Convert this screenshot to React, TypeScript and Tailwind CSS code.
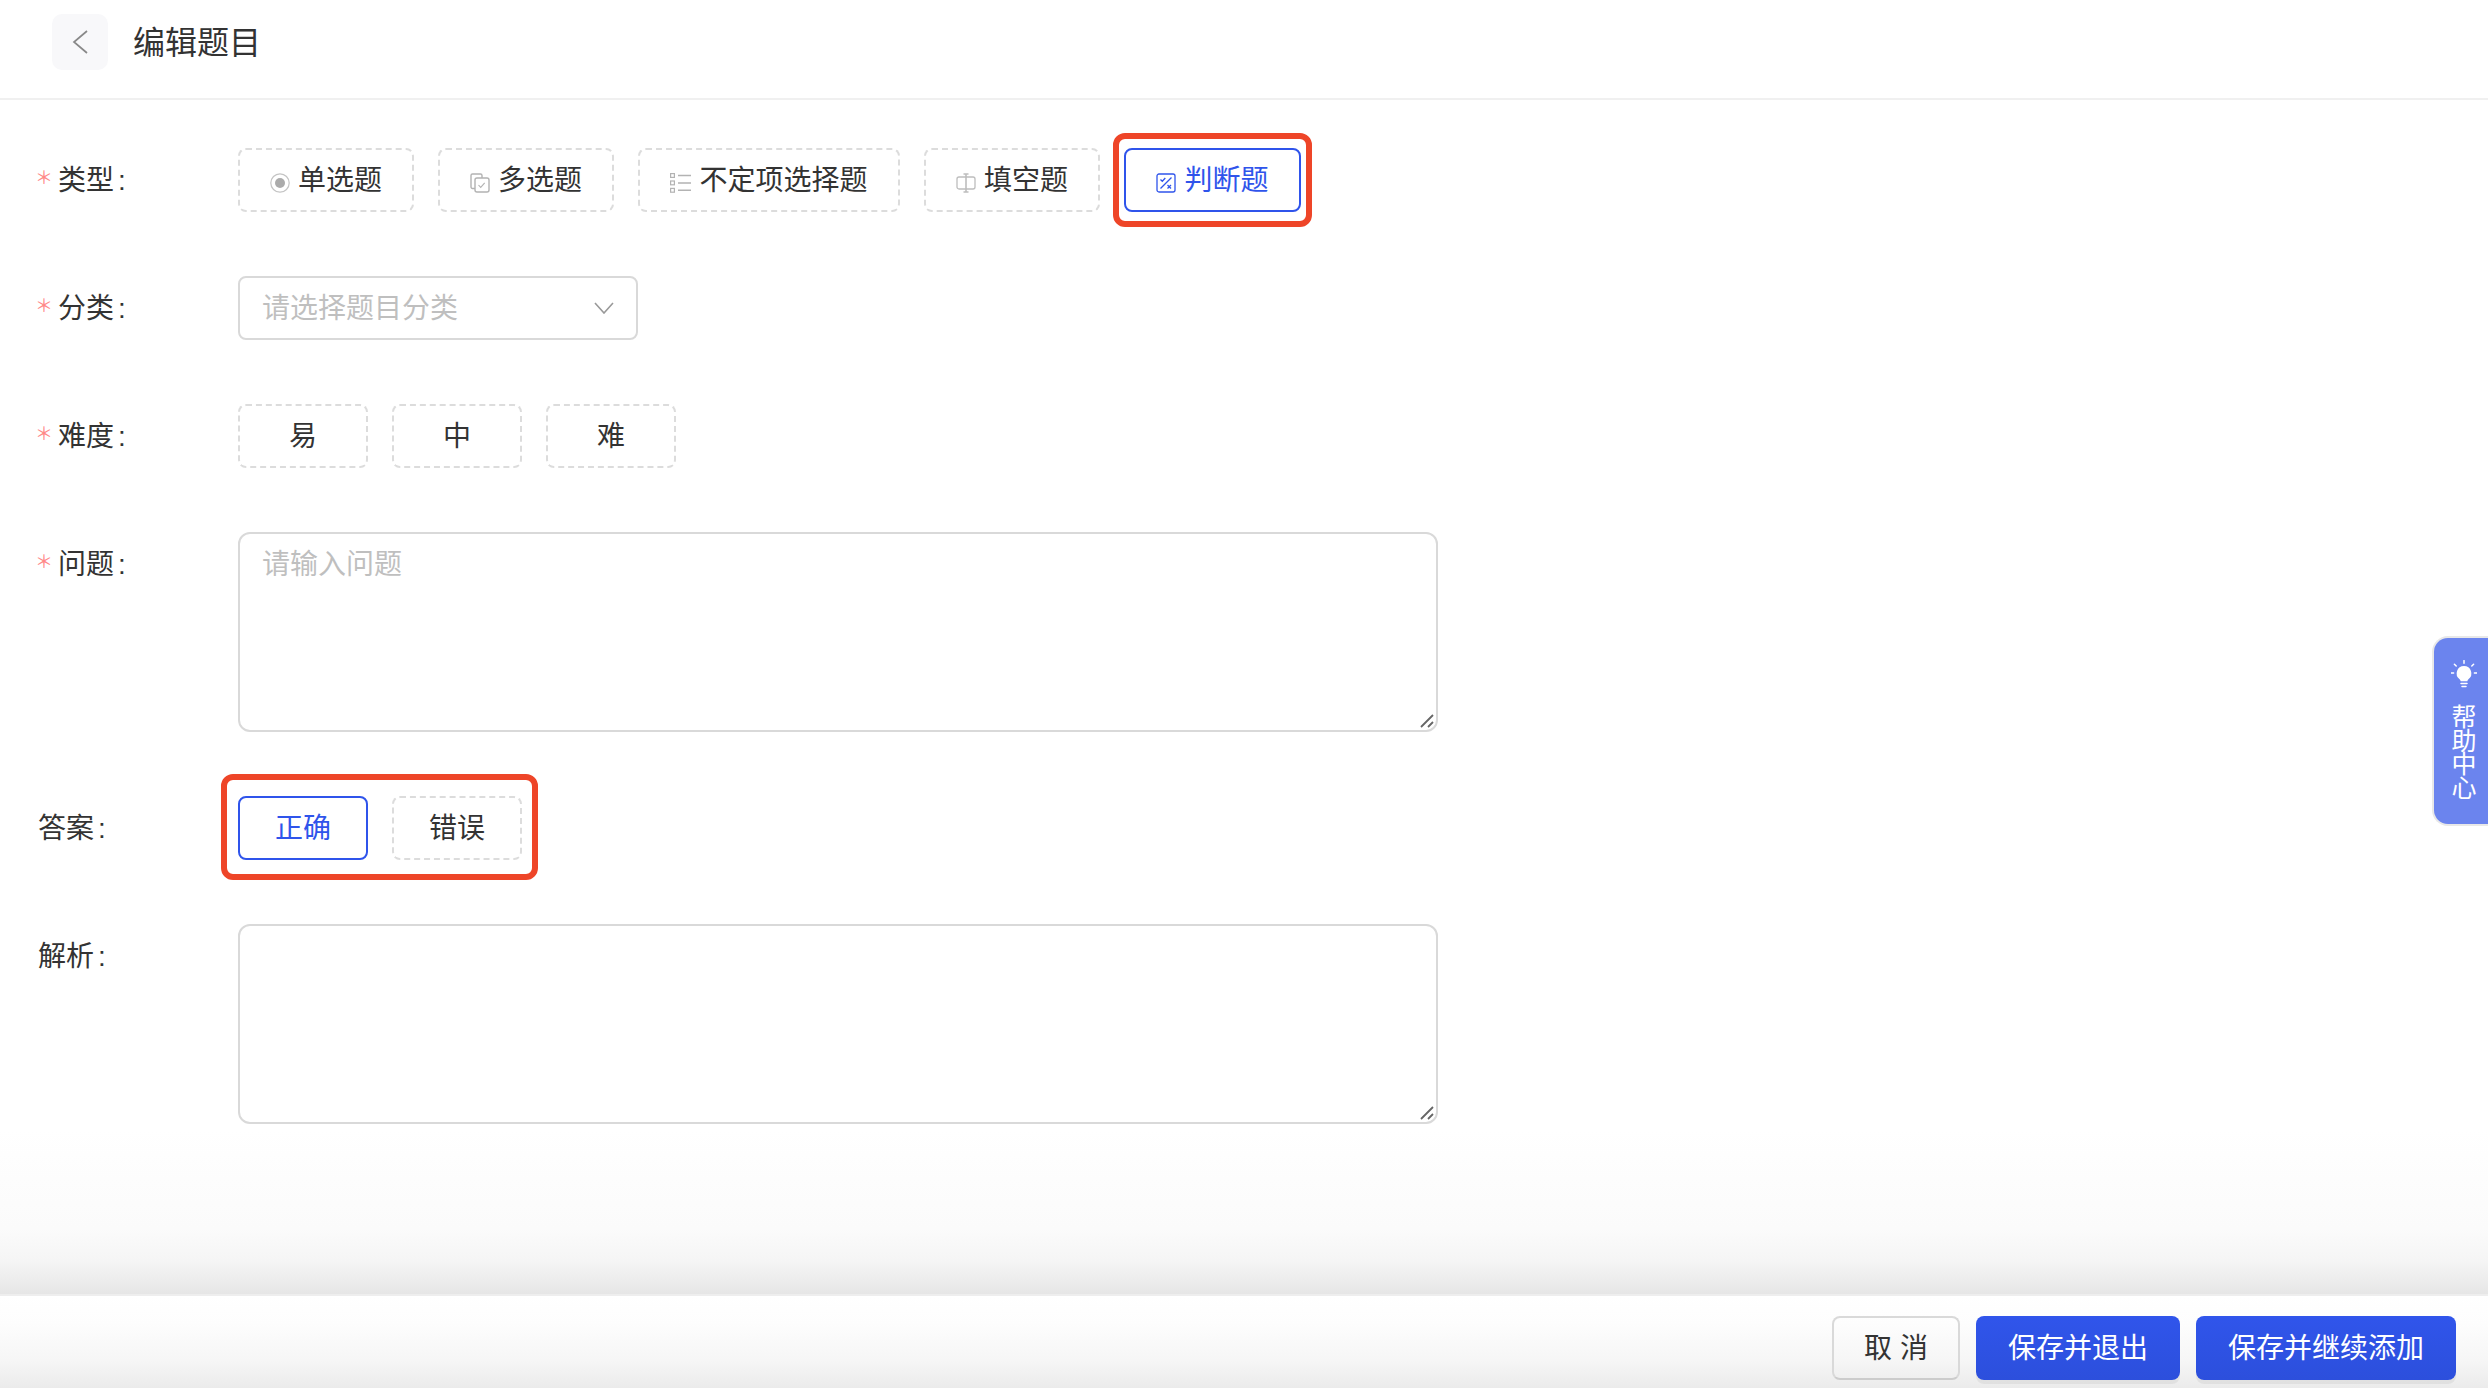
import { useState } from 'react';

const FONT = 'font-["Liberation_Sans","Noto_Sans_CJK_SC",sans-serif]';

function RadioIcon() {
  return (
    <svg viewBox="0 0 20 20" className="w-5 h-5 mt-[4px] shrink-0" fill="none">
      <circle cx="10" cy="10" r="9.2" stroke="#c4c4c4" strokeWidth="1.2" />
      <circle cx="10" cy="10" r="5" fill="#ababab" />
    </svg>
  );
}

function MultiIcon() {
  return (
    <svg viewBox="0 0 20 20" className="w-5 h-5 mt-[4px] shrink-0" fill="none" stroke="#b3b3b3" strokeWidth="1.4">
      <path d="M5 15.5H2.5A1.5 1.5 0 0 1 1 14V2.5A1.5 1.5 0 0 1 2.5 1h8A1.5 1.5 0 0 1 12 2.5V5" />
      <rect x="5" y="5" width="14" height="14" rx="2" />
      <path d="M8.5 12l2.2 2.4 4-4.6" strokeWidth="1.1" />
    </svg>
  );
}

function ListIcon() {
  return (
    <svg viewBox="0 0 21 20" className="w-[21px] h-5 mt-[4px] shrink-0" fill="none" stroke="#b3b3b3">
      <rect x="0.6" y="0.6" width="3.8" height="3.8" strokeWidth="1.2" />
      <rect x="0.6" y="8" width="3.8" height="3.8" strokeWidth="1.2" />
      <rect x="0.6" y="15.4" width="3.8" height="3.8" strokeWidth="1.2" />
      <path d="M8 2.5h13M8 10h13M8 17.3h13" strokeWidth="1.4" />
    </svg>
  );
}

function BlankIcon() {
  return (
    <svg viewBox="0 0 20 20" className="w-5 h-5 mt-[4px] shrink-0" fill="none" stroke="#bdbdbd" strokeWidth="1.3">
      <rect x="1" y="4" width="18" height="12" rx="2" />
      <path d="M10 1v18M7.5 1h5M7.5 19h5" strokeWidth="1.6" />
    </svg>
  );
}

function JudgeIcon() {
  return (
    <svg viewBox="0 0 20 20" className="w-5 h-5 mt-[4px] shrink-0" fill="none" stroke="#2f54eb" strokeWidth="1.3">
      <rect x="1" y="1" width="18" height="18" rx="2" />
      <path d="M4.5 6.5l1.8 1.8 3-3.3M15.5 4.5l-11 11M11.5 12l3.5 3.5M15 12l-3.5 3.5" />
    </svg>
  );
}

function BulbIcon() {
  return (
    <svg viewBox="0 0 26 28" className="w-[26px] h-7 shrink-0" fill="none">
      <path d="M13 6a7.4 7.4 0 0 0-4.4 13.3c.7.6 1 1.2 1 1.9h6.8c0-.7.3-1.3 1-1.9A7.4 7.4 0 0 0 13 6z" fill="#fff" />
      <path d="M10 23.5h6M11 26.5h4" stroke="#fff" strokeWidth="1.5" strokeLinecap="round" />
      <path d="M13 .6v2.6M3.4 4.2l1.8 1.8M22.6 4.2l-1.8 1.8M0 13h2.6M23.4 13H26" stroke="#fff" strokeWidth="1.5" strokeLinecap="round" />
    </svg>
  );
}

const TYPES = [
  { name: '单选题', icon: <RadioIcon />, width: 'w-[176px]' },
  { name: '多选题', icon: <MultiIcon />, width: 'w-[176px]' },
  { name: '不定项选择题', icon: <ListIcon />, width: 'w-[262px]' },
  { name: '填空题', icon: <BlankIcon />, width: 'w-[176px]' },
  { name: '判断题', icon: <JudgeIcon />, width: 'w-[177px]' },
];

function Label({ text, required }: { text: string; required?: boolean }) {
  return (
    <div className="w-[200px] shrink-0 h-[64px] pt-[2px] flex items-center text-[#333]">
      {required && <span className="w-[23px] -ml-[3px] -mt-[6px] text-[18px] leading-none text-[#f88]">＊</span>}
      <span>{text}</span>
      <span className="ml-1">:</span>
    </div>
  );
}

function Option({ active, width, icon, children }: { active?: boolean; width: string; icon?: React.ReactNode; children: React.ReactNode }) {
  return (
    <button
      type="button"
      className={`${width} h-[64px] pt-[2px] shrink-0 flex items-center justify-center gap-2 rounded-[8px] border-2 ${
        active ? 'border-solid border-[#2f54eb] text-[#2f54eb]' : 'border-dashed border-[#dcdcdc] text-[#333]'
      }`}
    >
      {icon}
      {children}
    </button>
  );
}

function RedFrame({ className }: { className: string }) {
  return <div className={`absolute border-[6px] border-[#ee4528] rounded-[12px] pointer-events-none ${className}`} />;
}

function Area({ placeholder }: { placeholder?: string }) {
  return (
    <div className="relative w-[1200px] h-[200px]">
      <textarea
        placeholder={placeholder}
        className="w-full h-full block resize-none rounded-[12px] border-2 border-[#d9d9d9] px-[22px] py-[10px] outline-none placeholder:text-[#bfbfbf]"
      />
      <svg viewBox="0 0 14 14" className="absolute right-[4px] bottom-[4px] w-[14px] h-[14px]" fill="none" stroke="#666" strokeWidth="1.8">
        <path d="M1 13L13 1M8 13l5-5" />
      </svg>
    </div>
  );
}

export default function App() {
  const [type, setType] = useState('判断题');

  return (
    <div className={`${FONT} w-full h-screen flex flex-col bg-white text-[28px] overflow-hidden`}>
      {/* Header */}
      <div className="h-[100px] shrink-0 flex items-center gap-[25px] pl-[52px] pb-[14px] border-b-2 border-[#f0f0f0]">
        <button type="button" className="w-[56px] h-[56px] rounded-[10px] bg-[#f8f8fa] flex items-center justify-center">
          <svg viewBox="0 0 16 24" className="w-4 h-6" fill="none" stroke="#888" strokeWidth="1.7">
            <path d="M15 1L2 12l13 11" />
          </svg>
        </button>
        <span className="text-[32px] text-[#333] mt-[2px]">编辑题目</span>
      </div>

      {/* Form */}
      <div className="flex-1 flex flex-col">
        <div className="flex flex-col gap-[64px] pl-[38px] pt-[48px]">
          <div className="flex">
            <Label text="类型" required />
            <div className="flex gap-6">
              {TYPES.map(t => (
                <div key={t.name} className="relative" onClick={() => setType(t.name)}>
                  <Option active={type === t.name} width={t.width} icon={t.icon}>{t.name}</Option>
                  {t.name === '判断题' && <RedFrame className="-left-[11px] -right-[11px] -top-[15px] -bottom-[15px]" />}
                </div>
              ))}
            </div>
          </div>

          <div className="flex">
            <Label text="分类" required />
            <div className="w-[400px] h-[64px] pt-[2px] flex items-center justify-between pl-[22px] pr-[22px] rounded-[8px] border-2 border-[#d9d9d9] text-[#bfbfbf]">
              <span>请选择题目分类</span>
              <svg viewBox="0 0 20 12" className="w-5 h-3 -mt-[2px]" fill="none" stroke="#999" strokeWidth="1.6">
                <path d="M1 1l9 10 9-10" />
              </svg>
            </div>
          </div>

          <div className="flex">
            <Label text="难度" required />
            <div className="flex gap-6">
              {['易', '中', '难'].map(d => (
                <Option key={d} width="w-[130px]">{d}</Option>
              ))}
            </div>
          </div>

          <div className="flex">
            <Label text="问题" required />
            <Area placeholder="请输入问题" />
          </div>

          <div className="flex">
            <Label text="答案" />
            <div className="relative flex gap-6">
              <Option active width="w-[130px]">正确</Option>
              <Option width="w-[130px]">错误</Option>
              <RedFrame className="-left-[17px] -right-[16px] -top-[22px] -bottom-[20px]" />
            </div>
          </div>

          <div className="flex">
            <Label text="解析" />
            <Area />
          </div>
        </div>
        <div className="mt-auto h-[166px] border-b-2 border-[#eee] bg-[linear-gradient(to_bottom,#fff_0%,#fbfbfb_60%,#f5f5f5_80%,#e6e6e6_100%)]" />
      </div>

      {/* Footer */}
      <div className="h-[92px] shrink-0 flex items-start justify-end gap-4 pt-[20px] pr-8 bg-[linear-gradient(to_bottom,#fff_0%,#fdfdfd_30%,#f6f6f6_70%,#ebebeb_100%)]">
        <button type="button" className="w-[128px] h-[64px] pt-[2px] rounded-[8px] border-2 border-[#d9d9d9] border-b-[#ccc] text-[#333]">取 消</button>
        <button type="button" className="w-[204px] h-[64px] pt-[2px] rounded-[8px] bg-[linear-gradient(to_bottom,#3055eb,#2c4fdc)] text-white shadow-[0_4px_0_rgba(0,0,0,0.05)]">保存并退出</button>
        <button type="button" className="w-[260px] h-[64px] pt-[2px] rounded-[8px] bg-[linear-gradient(to_bottom,#3055eb,#2c4fdc)] text-white shadow-[0_4px_0_rgba(0,0,0,0.05)]">保存并继续添加</button>
      </div>

      {/* Help tab */}
      <div className="fixed right-0 top-[636px] w-[56px] h-[190px] flex flex-col items-center pl-[6px] pt-[22px] rounded-l-[16px] bg-[#6b84ee] border-2 border-r-0 border-[#e8e8e8] text-white text-[25px] leading-[23.5px]">
        <BulbIcon />
        <div className="mt-[18px] flex flex-col items-center">
          {['帮', '助', '中', '心'].map(c => <span key={c}>{c}</span>)}
        </div>
      </div>
    </div>
  );
}
